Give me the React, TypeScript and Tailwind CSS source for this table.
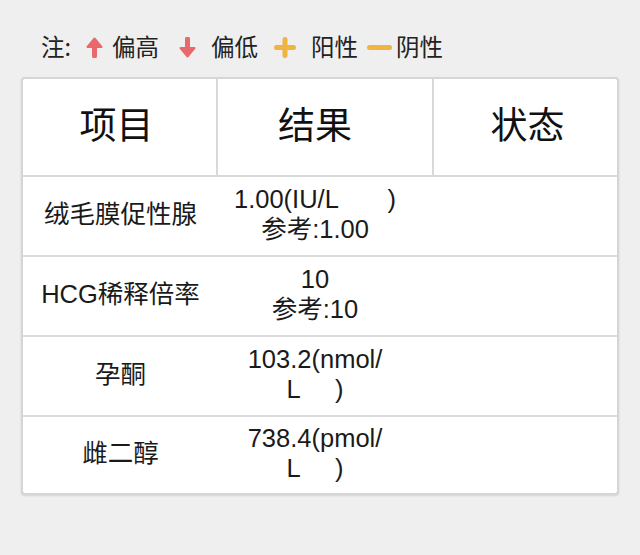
import React from 'react';

type Row = { name: string; lines: string[] };

const ROWS: Row[] = [
  { name: '绒毛膜促性腺', lines: ['1.00(IU/L       )', '参考:1.00'] },
  { name: 'HCG稀释倍率', lines: ['10', '参考:10'] },
  { name: '孕酮', lines: ['103.2(nmol/', 'L     )'] },
  { name: '雌二醇', lines: ['738.4(pmol/', 'L     )'] },
];

const ArrowUp = () => (
  <svg width="17" height="21" viewBox="0 0 17 21">
    <path d="M8.5 19V8" stroke="#e8696b" strokeWidth="5" strokeLinecap="round" />
    <path d="M1.5 10L8.5 1.5L15.5 10Z" fill="#e8696b" stroke="#e8696b" strokeWidth="2" strokeLinejoin="round" />
  </svg>
);

const ArrowDown = () => (
  <svg width="17" height="21" viewBox="0 0 17 21">
    <path d="M8.5 2V13" stroke="#e8696b" strokeWidth="5" strokeLinecap="round" />
    <path d="M1.5 11L8.5 19.5L15.5 11Z" fill="#e8696b" stroke="#e8696b" strokeWidth="2" strokeLinejoin="round" />
  </svg>
);

const Plus = () => (
  <svg width="22" height="21" viewBox="0 0 22 21">
    <path d="M2.5 10.5H19.5M11 2.5V18.5" stroke="#efb441" strokeWidth="5" strokeLinecap="round" />
  </svg>
);

const Minus = () => (
  <svg width="25" height="21" viewBox="0 0 25 21">
    <path d="M2.5 10.5H22.5" stroke="#efb441" strokeWidth="5" strokeLinecap="round" />
  </svg>
);

export default function App() {
  return (
    <div className="min-h-[555px] bg-[#efefef] font-['Liberation_Sans','Noto_Sans_CJK_SC',sans-serif] text-[#1a1a1a]">
      {/* Legend */}
      <div className="flex items-center h-[30px] pt-[32px] pl-[41px] pb-[15px] box-content text-[23.5px] text-[#222] font-['Noto_Sans_CJK_SC',sans-serif]">
        <span>注:</span>
        <span className="ml-[15px] flex items-center"><ArrowUp /></span>
        <span className="ml-[9px]">偏高</span>
        <span className="ml-[20px] flex items-center"><ArrowDown /></span>
        <span className="ml-[15px]">偏低</span>
        <span className="ml-[16px] flex items-center"><Plus /></span>
        <span className="ml-[15px]">阳性</span>
        <span className="ml-[9px] flex items-center"><Minus /></span>
        <span className="ml-[4px]">阴性</span>
      </div>

      {/* Table card */}
      <div className="mx-[21px] rounded-[4px] border-2 border-[#d6d6d6] bg-white overflow-hidden shadow-[0_1px_2px_rgba(0,0,0,0.12)]">
        <div className="grid grid-cols-[195px_216px_1fr] h-[98px] border-b-2 border-[#d9d9d9] text-[37px] text-[#111]">
          <div className="flex items-center justify-center border-r-2 border-[#d9d9d9] pr-[6px]">项目</div>
          <div className="flex items-center justify-center border-r-2 border-[#d9d9d9] pr-[20px]">结果</div>
          <div className="flex items-center justify-center pl-[4px]">状态</div>
        </div>
        {ROWS.map((row, i) => (
          <div
            key={row.name}
            className={`grid grid-cols-[195px_194px_1fr] text-[25.5px] leading-[30px] ${i < ROWS.length - 1 ? 'h-[80px] border-b-2 border-[#dcdcdc]' : 'h-[76px]'}`}
          >
            <div className="flex items-center justify-center pb-[4px]">{row.name}</div>
            <div className="flex flex-col items-center justify-center pb-[4px] whitespace-pre">
              {row.lines.map((l, j) => (
                <span key={j}>{l}</span>
              ))}
            </div>
            <div />
          </div>
        ))}
      </div>
    </div>
  );
}
